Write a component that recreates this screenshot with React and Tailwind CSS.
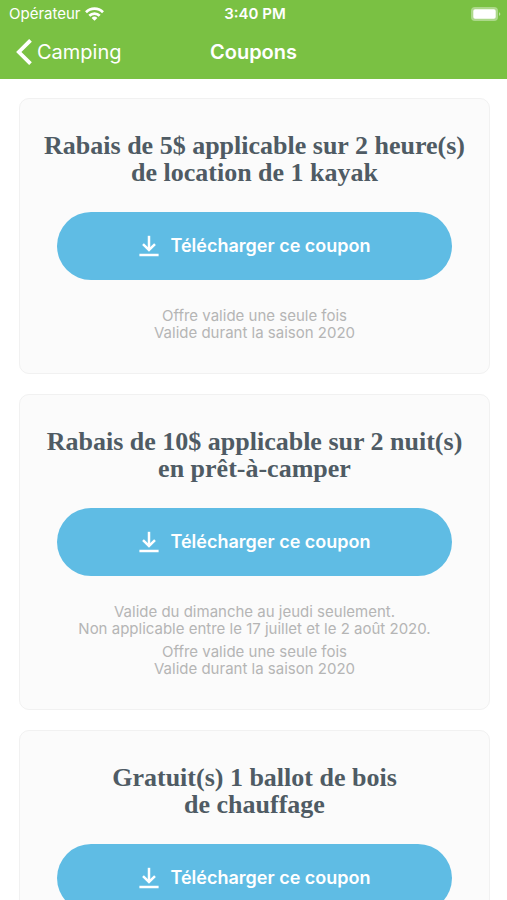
const coupons = [
  {
    id: 1,
    title: ["Rabais de 5$ applicable sur 2 heure(s)", "de location de 1 kayak"],
    notes: [["Offre valide une seule fois", "Valide durant la saison 2020"]],
  },
  {
    id: 2,
    title: ["Rabais de 10$ applicable sur 2 nuit(s)", "en prêt-à-camper"],
    notes: [
      [
        "Valide du dimanche au jeudi seulement.",
        "Non applicable entre le 17 juillet et le 2 août 2020.",
      ],
      ["Offre valide une seule fois", "Valide durant la saison 2020"],
    ],
  },
  {
    id: 3,
    title: ["Gratuit(s) 1 ballot de bois", "de chauffage"],
    notes: [],
  },
];

function WifiIcon() {
  return (
    <svg viewBox="0 0 19 14" className="w-[19px] h-[14px]" fill="none" stroke="currentColor" strokeWidth="2.7">
      <path d="M1 5.2a12 12 0 0 1 17 0" />
      <path d="M4.3 8.8a7.4 7.4 0 0 1 10.4 0" />
      <path d="M9.5 13.8 6.6 10.9a4.1 4.1 0 0 1 5.8 0z" fill="currentColor" stroke="none" />
    </svg>
  );
}

function BatteryIcon() {
  return (
    <svg viewBox="0 0 30 14" className="w-[30px] h-[14px]" fill="currentColor">
      <rect x="0" y="0" width="27" height="14" rx="4" fillOpacity="0.38" />
      <rect x="2.3" y="2.3" width="22.4" height="9.4" rx="1.8" />
      <path d="M28 5.2c1.8.5 1.8 3.1 0 3.6z" fillOpacity="0.5" />
    </svg>
  );
}

function DownloadIcon() {
  return (
    <svg viewBox="0 0 20 22" className="w-5 h-[22px]" fill="none" stroke="currentColor" strokeWidth="2.5">
      <path d="M10 .8v14" />
      <path d="M4 9.2l6 5.8 6-5.8" />
      <path d="M.4 20h19.2" />
    </svg>
  );
}

function Header() {
  return (
    <header className="shrink-0 bg-[#7ac143] text-white">
      <div className="grid grid-cols-3 items-center h-7 pl-[9px] pr-[6px] text-[15px]">
        <div className="flex items-center gap-1">
          <span>Opérateur</span>
          <WifiIcon />
        </div>
        <span className="text-center font-semibold">3:40 PM</span>
        <div className="flex justify-end">
          <BatteryIcon />
        </div>
      </div>
      <nav className="grid grid-cols-3 items-center h-[51px] px-4 pb-1">
        <a href="#camping" className="flex items-center gap-[5px] text-xl">
          <svg viewBox="0 0 16 26" className="w-4 h-[26px]" fill="none" stroke="currentColor" strokeWidth="3.8">
            <path d="M14.5 1.3 2.8 13l11.7 11.7" />
          </svg>
          Camping
        </a>
        <h1 className="text-center text-xl font-semibold">Coupons</h1>
      </nav>
    </header>
  );
}

function CouponCard({ title, notes }) {
  return (
    <article className="rounded-[10px] border border-[#f1f1f1] bg-[#fbfbfb] pt-[33px] pb-8 text-center">
      <h2 className="px-4 font-['Palatino_Linotype',Palatino,'Liberation_Serif',serif] text-[26px] leading-[27px] font-bold text-[#4f5b64]">
        {title.map(line => (
          <span key={line} className="block">{line}</span>
        ))}
      </h2>
      <div className="px-[37px] pt-[26px] pb-[27px]">
        <button
          type="button"
          className="flex w-full h-[68px] items-center justify-center gap-3 rounded-full bg-[#5fbce4] text-lg font-semibold text-white"
        >
          <DownloadIcon />
          Télécharger ce coupon
        </button>
      </div>
      <div className="flex flex-col gap-[6px] px-4 text-[15px] leading-[17px] text-[#b5b5b5]">
        {notes.map(lines => (
          <p key={lines[0]}>
            {lines.map(line => (
              <span key={line} className="block">{line}</span>
            ))}
          </p>
        ))}
      </div>
    </article>
  );
}

function App() {
  return (
    <div className="flex h-screen flex-col bg-white font-[Inter,sans-serif]">
      <Header />
      {/* Coupon list scrolls under the header */}
      <main className="flex min-h-0 flex-1 flex-col gap-5 overflow-y-auto pt-[19px] pr-[17px] pb-5 pl-[19px] [scrollbar-width:none]">
        {coupons.map(c => (
          <CouponCard key={c.id} title={c.title} notes={c.notes} />
        ))}
      </main>
    </div>
  );
}

export default App;
